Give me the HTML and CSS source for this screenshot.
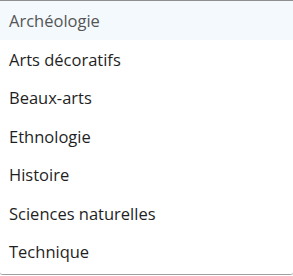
FILE: index.html
```html
<!DOCTYPE html>
<html>
  <head>
    <title>Domaines</title>
    <link rel="stylesheet" href="styles.css">
  </head>
  <body>
    <ul class="listbox">
      <li class="option active">Archéologie</li>
      <li class="option">Arts décoratifs</li>
      <li class="option">Beaux-arts</li>
      <li class="option">Ethnologie</li>
      <li class="option">Histoire</li>
      <li class="option">Sciences naturelles</li>
      <li class="option">Technique</li>
    </ul>
  </body>
</html>
```
FILE: styles.css
```css
body {
  margin: 0;
  background: #ffffff;
}

.listbox {
  list-style: none;
  margin: 0;
  padding: 0 0 3px 0;
  width: 293px;
  box-sizing: border-box;
  border-top: 1px solid #8f8f8f;
  border-bottom: 1px solid #a0a0a0;
  border-radius: 0 0 3px 3px;
  box-shadow: 0 1px 1px rgba(0, 0, 0, 0.12);
  font-family: "Open Sans", "Noto Sans", sans-serif;
  font-size: 16.5px;
}

.option {
  height: 38.5px;
  line-height: 39px;
  padding-left: 9px;
  color: #1f1f1f;
}

.option.active {
  background: #f3f9fd;
  color: #555555;
}
```
